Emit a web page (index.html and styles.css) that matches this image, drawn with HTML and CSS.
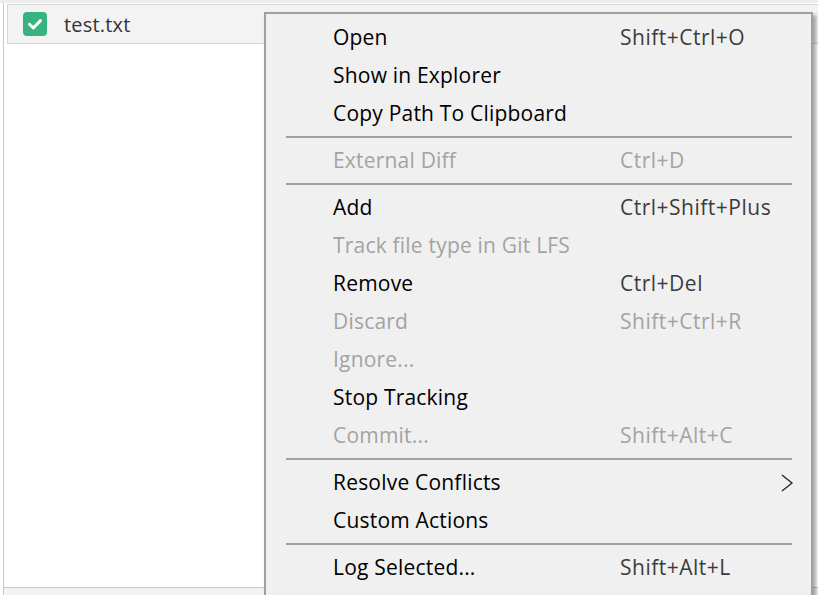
FILE: index.html
```
<!DOCTYPE html>
<html>
<head>
<meta charset="utf-8">
<link rel="stylesheet" href="styles.css">
</head>
<body>
<div class="topstrip"></div>
<div class="frame">
  <div class="row">
    <span class="check">
      <svg width="24" height="24" viewBox="0 0 24 24"><rect x="0" y="0" width="24" height="24" rx="4" fill="#36b37e"/><path d="M6.5 12.3 L10.3 16 L17.5 8.6" fill="none" stroke="#fff" stroke-width="3" stroke-linecap="round" stroke-linejoin="round"/></svg>
    </span>
    <span class="fname">test.txt</span>
  </div>
  <div class="empty"></div>
  <div class="bottom"></div>
</div>

<div class="menu">
  <div class="item"><span class="label">Open</span><span class="key">Shift+Ctrl+O</span></div>
  <div class="item"><span class="label">Show in Explorer</span></div>
  <div class="item"><span class="label">Copy Path To Clipboard</span></div>
  <div class="sep"></div>
  <div class="item disabled"><span class="label">External Diff</span><span class="key">Ctrl+D</span></div>
  <div class="sep"></div>
  <div class="item"><span class="label">Add</span><span class="key">Ctrl+Shift+Plus</span></div>
  <div class="item disabled"><span class="label">Track file type in Git LFS</span></div>
  <div class="item"><span class="label">Remove</span><span class="key">Ctrl+Del</span></div>
  <div class="item disabled"><span class="label">Discard</span><span class="key">Shift+Ctrl+R</span></div>
  <div class="item disabled"><span class="label">Ignore...</span></div>
  <div class="item"><span class="label">Stop Tracking</span></div>
  <div class="item disabled"><span class="label">Commit...</span><span class="key">Shift+Alt+C</span></div>
  <div class="sep"></div>
  <div class="item"><span class="label">Resolve Conflicts</span>
    <svg class="arrow" width="14" height="18" viewBox="0 0 14 18"><path d="M2 1 L12 9 L2 17" fill="none" stroke="#222" stroke-width="1.3"/></svg>
  </div>
  <div class="item"><span class="label">Custom Actions</span></div>
  <div class="sep"></div>
  <div class="item"><span class="label">Log Selected...</span><span class="key">Shift+Alt+L</span></div>
</div>
</body>
</html>
```
FILE: styles.css
```
html, body {
  margin: 0;
  padding: 0;
  background: #ffffff;
  width: 818px;
  height: 595px;
  overflow: hidden;
  font-family: "Open Sans", "Noto Sans", sans-serif;
}
.topstrip {
  height: 3px;
  background: #ececec;
}
.frame {
  margin-left: 3px;
  border-left: 1px solid #c8c8c8;
  height: 592px;
  display: flex;
  flex-direction: column;
  padding-top: 1px;
  box-sizing: border-box;
}
.row {
  margin-left: 3px;
  height: 40px;
  box-sizing: border-box;
  border: 1px solid #d6d6d6;
  border-right: none;
  background: #f3f3f3;
  display: flex;
  align-items: center;
  padding-left: 15px;
}
.check {
  display: flex;
  width: 24px;
  height: 24px;
}
.fname {
  margin-left: 17px;
  font-size: 20px;
  letter-spacing: 0.2px;
  color: #333;
}
.empty {
  flex: 1;
}
.bottom {
  height: 7px;
  border-top: 1px solid #c8c8c8;
  background: #f3f3f3;
}
.menu {
  position: absolute;
  left: 264px;
  top: 12px;
  width: 549px;
  height: 600px;
  box-sizing: border-box;
  border: 2px solid #a0a0a0;
  background: #f0f0f0;
  padding-top: 5px;
  box-shadow: 3px 3px 4px rgba(0,0,0,0.35);
}
.item {
  height: 38px;
  box-sizing: border-box;
  padding-bottom: 2px;
  display: flex;
  align-items: center;
  padding-left: 67px;
  font-size: 21px;
  color: #000;
  position: relative;
}
.label {
  width: 287px;
  flex: none;
  letter-spacing: 0.2px;
  white-space: nowrap;
}
.key {
  color: #3c3c3c;
  letter-spacing: 0.5px;
}
.disabled .label, .disabled .key {
  color: #a3a3a3;
}
.sep {
  height: 2px;
  margin: 3px 19px 4px 20px;
  background: #a0a0a0;
}
.arrow {
  margin-left: auto;
  margin-right: 17px;
  margin-top: 2px;
}
```
